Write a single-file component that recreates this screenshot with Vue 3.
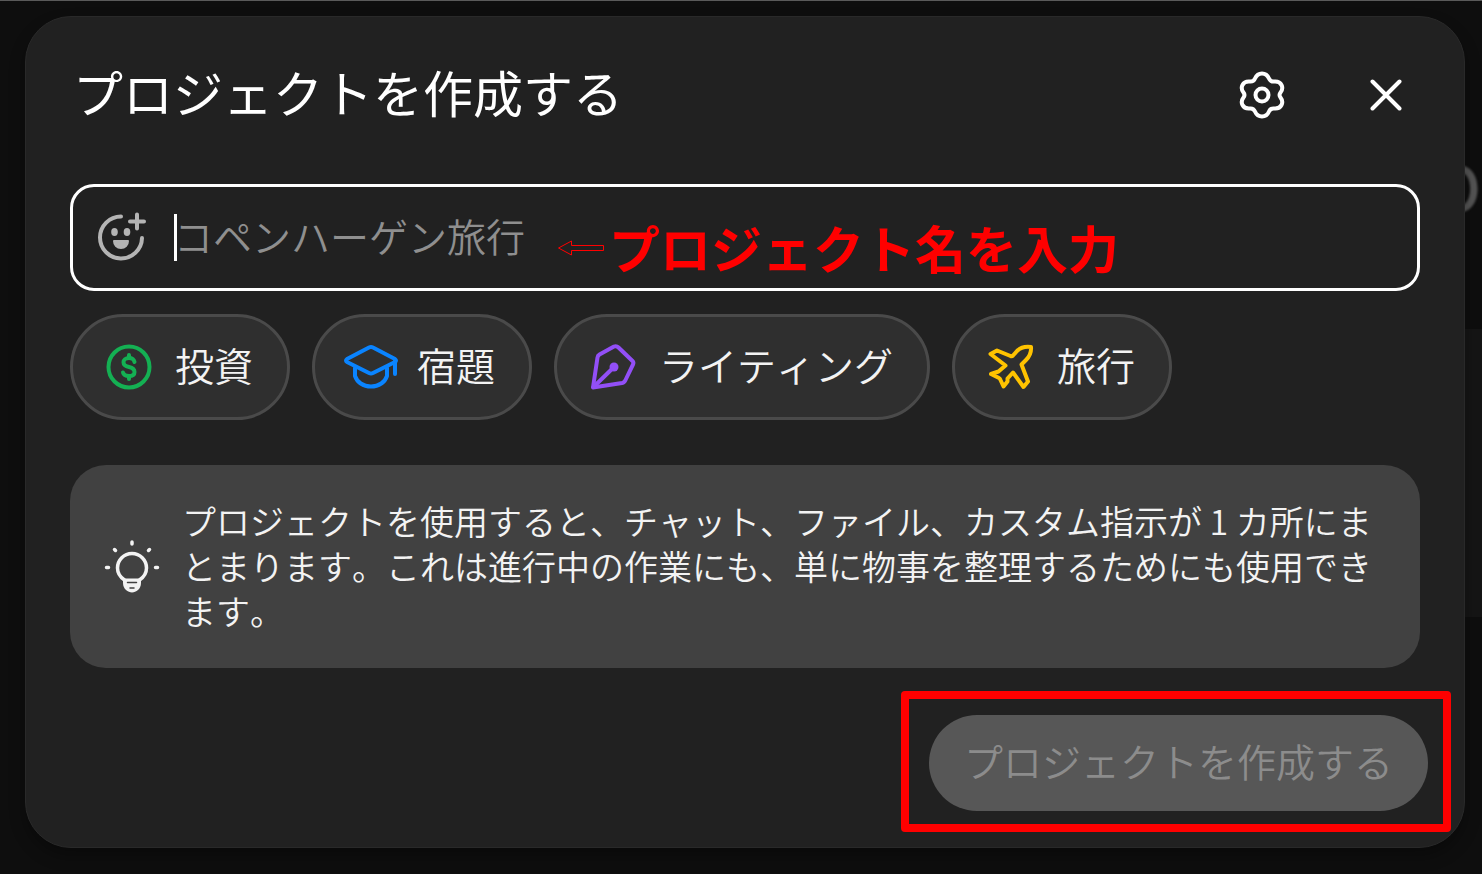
<template>
  <div class="page">
    <span class="backdrop-text" aria-hidden="true">O</span>
    <span class="backdrop-panel"></span>

    <section class="modal" role="dialog" aria-labelledby="modal-title">
      <header class="modal-header">
        <h2 id="modal-title">プロジェクトを作成する</h2>
        <div class="header-actions">
          <button type="button" class="icon-button" aria-label="設定">
            <svg width="48" height="50" viewBox="0 0 48 50" fill="none" stroke="currentColor" stroke-width="4" stroke-linejoin="round">
              <path d="M24 3.500C27.500 3.500 29.500 5 31 8.500C32 10.800 33.500 11.800 36 11.600C40 11.200 42 12 43.500 15C45 18 44.500 20 42.500 22.500C41.200 24.200 41.200 25.800 42.500 27.500C44.500 30 45 32 43.500 35C42 38 40 38.800 36 38.400C33.500 38.200 32 39.200 31 41.500C29.500 45 27.500 46.500 24 46.500C20.500 46.500 18.500 45 17 41.500C16 39.200 14.500 38.200 12 38.400C8 38.800 6 38 4.500 35C3 32 3.500 30 5.500 27.500C6.800 25.800 6.800 24.200 5.500 22.500C3.500 20 3 18 4.500 15C6 12 8 11.200 12 11.600C14.500 11.800 16 10.800 17 8.500C18.500 5 20.500 3.500 24 3.500Z" />
              <circle cx="24" cy="25" r="6.500" />
            </svg>
          </button>
          <button type="button" class="icon-button" aria-label="閉じる">
            <svg width="32" height="32" viewBox="0 0 32 32" fill="none" stroke="currentColor" stroke-width="4" stroke-linecap="round">
              <path d="M2.500 2.500L29.500 29.500M29.500 2.500L2.500 29.500" />
            </svg>
          </button>
        </div>
      </header>

      <form id="project-form" class="modal-body" @submit.prevent>
        <!-- プロジェクト名 -->
        <div class="name-field">
          <button type="button" class="emoji-button" aria-label="アイコンを選択">
            <svg width="50" height="50" viewBox="0 0 50 50" fill="none" stroke="currentColor" stroke-width="4" stroke-linecap="round">
              <path d="M24 5.500A21 21 0 1 0 45 27" />
              <path d="M40 3.500V17.500M33 10.500H47" />
              <ellipse cx="17.500" cy="21" rx="3.300" ry="4" fill="currentColor" stroke="none" />
              <ellipse cx="30" cy="21" rx="3.300" ry="4" fill="currentColor" stroke="none" />
              <path d="M17 30H31C31 34 28 37 24 37C20 37 17 34 17 30Z" fill="currentColor" stroke-width="2" stroke-linejoin="round" />
            </svg>
          </button>
          <span class="caret"></span>
          <input v-model="projectName" type="text" aria-label="プロジェクト名" placeholder="コペンハーゲン旅行" />
          <div class="note">
            <svg width="48" height="18" viewBox="0 0 48 18" fill="none" stroke="currentColor">
              <path d="M1.500 10L14.500 3V7.500H46.500V12.500H14.500V17Z" />
            </svg>
            <span>プロジェクト名を入力</span>
          </div>
        </div>

        <!-- カテゴリー -->
        <div class="chips">
          <button v-for="item in categories" :key="item.label" type="button" class="chip">
            <span class="chip-icon" :class="item.color">
              <svg
                :width="item.width"
                height="48"
                :viewBox="`0 0 ${item.width} 48`"
                fill="none"
                stroke="currentColor"
                stroke-width="4"
                stroke-linecap="round"
                stroke-linejoin="round"
              >
                <path v-for="d in item.paths" :key="d" :d="d" />
                <circle v-if="item.dot" :cx="item.dot.x" :cy="item.dot.y" r="4.500" fill="currentColor" stroke="none" />
              </svg>
            </span>
            <span class="chip-label">{{ item.label }}</span>
          </button>
        </div>

        <div class="info">
          <svg class="bulb" width="56" height="56" viewBox="0 0 56 56" fill="none" stroke="currentColor" stroke-width="4" stroke-linecap="round">
            <path d="M20.500 42C16 39 13.500 35 13.500 30A14.500 14.500 0 0 1 42.500 30C42.500 35 40 39 35.500 42" stroke-width="3.500" />
            <path d="M19 40.500H37V45C37 51 32 54.500 28 54.500C24 54.500 19 51 19 45Z" fill="currentColor" stroke="none" />
            <path d="M23.500 44.500H32.500M26 50H30" class="bulb-gap" stroke-width="1.500" />
            <path d="M28 4V6M10.500 11.500L11.500 12.500M45.500 11.500L44.500 12.500M2.500 29.500H4.500M51.500 29.500H53.500" stroke-width="3.500" />
          </svg>
          <p>プロジェクトを使用すると、チャット、ファイル、カスタム指示が 1 カ所にまとまります。これは進行中の作業にも、単に物事を整理するためにも使用できます。</p>
        </div>
      </form>

      <footer class="modal-footer">
        <div class="highlight">
          <button type="submit" form="project-form" class="submit" :disabled="!projectName">プロジェクトを作成する</button>
        </div>
      </footer>
    </section>
  </div>
</template>

<script setup>
import { ref } from 'vue'

const projectName = ref('')

const categories = [
  {
    label: '投資',
    color: 'green',
    width: 48,
    paths: [
      'M24 3.500A20.500 20.500 0 1 1 24 44.500A20.500 20.500 0 1 1 24 3.500Z',
      'M29.500 19C29 16.500 27 15 24 15C20.500 15 18.500 16.800 18.500 19.200C18.500 22.300 20.500 23.200 24 24C27.500 24.800 29.500 26 29.500 29C29.500 31.500 27.500 33 24 33C20.500 33 18.500 31.500 18 29.500',
      'M24 12V14M24 34V36'
    ]
  },
  {
    label: '宿題',
    color: 'blue',
    width: 56,
    paths: [
      'M26 4.500Q28 3.500 30 4.500L52 16Q54 17.500 52 19L30 30Q28 31 26 30L4 19Q2 17.500 4 16Z',
      'M12 25V33C14 39 20 43.500 28 43.500C36 43.500 42 39 44 33V25',
      'M52 18V31'
    ]
  },
  {
    label: 'ライティング',
    color: 'purple',
    width: 48,
    paths: [
      'M4 44.500L8.500 14.500Q8.800 12.500 10.500 11.500L25 3.500Q27.500 2.500 29.500 4.500L43.500 18Q45 19.500 44 21.500L36.500 37Q35.500 39.500 33 40Z',
      'M4.500 44L25 24'
    ],
    dot: { x: 25, y: 24 }
  },
  {
    label: '旅行',
    color: 'yellow',
    width: 48,
    paths: [
      'M44 4C37 3 33 5 30 8L26 12.500Q25 13.500 23.500 13L10 7.500L3.500 11L18.500 22.500L11.500 28.500L4 31L12 35Q13 35.500 13.500 37L16.500 43.500L20.500 38.500V35.500L26 29.500L36.500 44L41 38.500L34.500 21.500L39 17C43 13 44.500 10 44 4Z'
    ]
  }
]
</script>

<style>
body {
  background-color: #0e0e0e;
}
</style>

<style scoped>
.page {
  position: relative;
  box-sizing: border-box;
  min-height: 100vh;
  padding: 15px 17px 26px 25px;
  overflow: hidden;
  border-top: 1px solid #5a5a5a;
  background-color: #0e0e0e;
  color: #fff;
  font-family: "Noto Sans CJK JP", sans-serif;
  font-weight: 350;
  font-kerning: none;
}

.backdrop-text {
  position: absolute;
  top: 148px;
  right: 1px;
  color: #555;
  font-size: 62px;
  font-weight: 500;
  line-height: 72px;
  filter: blur(1px);
}

.backdrop-panel {
  position: absolute;
  top: 328px;
  right: 0;
  width: 60px;
  height: 288px;
  background-color: #151515;
}

.modal {
  position: relative;
  border: 1px solid #292929;
  border-radius: 46px;
  background-color: #212121;
  box-shadow: 0 8px 16px rgba(0, 0, 0, 0.3);
}

button {
  padding: 0;
  border: none;
  background: none;
  color: inherit;
  font: inherit;
  font-kerning: none;
  cursor: pointer;
}

svg {
  display: block;
  flex: none;
}

.modal-header {
  display: flex;
  justify-content: space-between;
  align-items: center;
  padding: 40px 62px 0 47px;
}

h2 {
  margin: 0;
  padding-bottom: 8px;
  font-size: 50px;
  font-weight: 400;
  line-height: 68px;
}

.header-actions {
  display: flex;
  align-items: center;
  gap: 84px;
}

.modal-body {
  padding: 51px 44px 0;
}

.name-field {
  position: relative;
  display: flex;
  align-items: center;
  box-sizing: border-box;
  height: 107px;
  padding: 0 24px;
  border: 3px solid #fff;
  border-radius: 24px;
}

.emoji-button {
  margin-right: 27px;
  padding-bottom: 4px;
  color: #b4b4b4;
}

.caret {
  flex: none;
  width: 3px;
  height: 47px;
  margin-right: -3px;
  background-color: #fff;
}

input {
  flex: 1;
  min-width: 0;
  height: 60px;
  padding: 0 0 6px;
  border: none;
  outline: none;
  background: none;
  color: #fff;
  font: inherit;
  font-size: 39px;
}

input::placeholder {
  color: #8f8f8f;
  opacity: 1;
}

/* 入力欄の上に重ねる注釈 */
.note {
  position: absolute;
  top: 24px;
  left: 484px;
  display: flex;
  align-items: center;
  gap: 4px;
  color: #f00;
  font-size: 51px;
  font-weight: 700;
  line-height: 72px;
  white-space: nowrap;
  pointer-events: none;
}

.chips {
  display: flex;
  gap: 22px;
  margin-top: 23px;
}

.chip {
  display: flex;
  align-items: center;
  gap: 22px;
  box-sizing: border-box;
  height: 106px;
  padding: 0 34px 0 32px;
  border: 3px solid #4a4a4a;
  border-radius: 53px;
  background-color: #2f2f2f;
  color: #f3f3f3;
  font-size: 39px;
}

.chip-icon {
  display: flex;
  justify-content: center;
  width: 48px;
}

.chip-label {
  padding-bottom: 6px;
}

.green {
  color: #14b053;
}

.blue {
  color: #0a84ff;
}

.purple {
  color: #924ff7;
}

.yellow {
  color: #ffc300;
}

.info {
  display: flex;
  align-items: center;
  gap: 22px;
  margin-top: 45px;
  padding: 33px 40px 35px 34px;
  border-radius: 36px;
  background-color: #414141;
  color: #f3f3f3;
}

.info p {
  margin: 0;
  font-size: 34px;
  line-height: 45px;
}

.bulb-gap {
  stroke: #414141;
}

.modal-footer {
  display: flex;
  justify-content: flex-end;
  padding: 23px 13px 15px;
}

.highlight {
  padding: 16px 15px 13px 20px;
  border: 8px solid #f00;
  border-radius: 4px;
}

.submit {
  display: block;
  height: 96px;
  padding: 0 35px 6px;
  border-radius: 48px;
  background-color: #575757;
  color: #8c8c8c;
  font-size: 39px;
}
</style>
